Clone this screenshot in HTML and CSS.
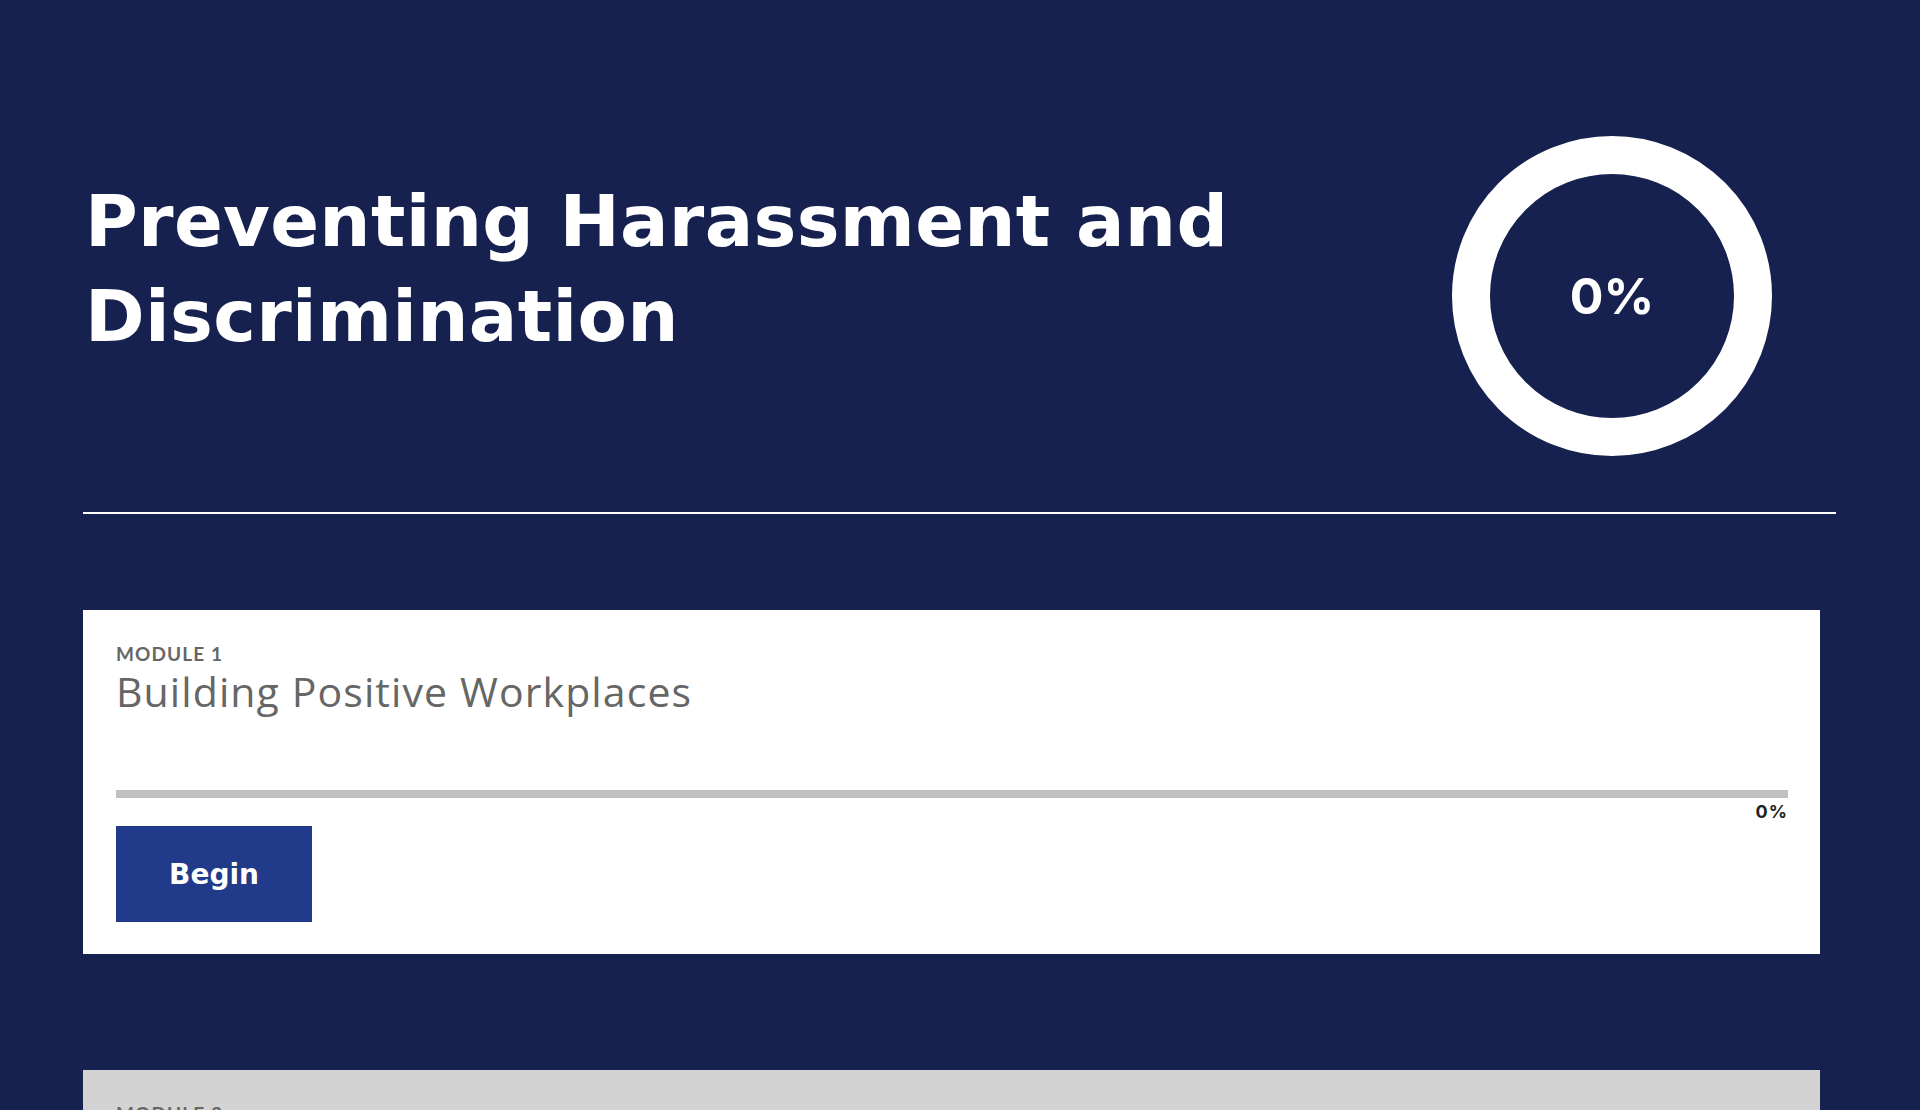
FILE: index.html
```html
<!DOCTYPE html>
<html lang="en">
<head>
<meta charset="utf-8">
<title>Preventing Harassment and Discrimination</title>
<link rel="stylesheet" href="styles.css">
</head>
<body>
<main class="page">
  <header class="course-header">
    <h1 class="course-title">Preventing Harassment and<br>Discrimination</h1>
    <div class="ring">
      <span class="ring-value">0%</span>
    </div>
  </header>
  <hr class="rule">
  <section class="modules">
    <article class="module">
      <div class="module-label">MODULE 1</div>
      <h2 class="module-title">Building Positive Workplaces</h2>
      <div class="progress"><div class="progress-fill" style="width:0%"></div></div>
      <div class="progress-value">0%</div>
      <a class="btn" href="#">Begin</a>
    </article>
    <article class="module locked">
      <div class="module-label">MODULE 2</div>
    </article>
  </section>
</main>
</body>
</html>
```
FILE: styles.css
```css
html, body {
  margin: 0;
  padding: 0;
  background: #16214f;
}
body {
  font-family: Inter, "Liberation Sans", sans-serif;
  overflow: hidden;
}
.page {
  padding: 0 84px 0 83px;
}
.course-header {
  display: flex;
  align-items: flex-start;
  justify-content: space-between;
  padding: 136px 64px 56px 0;
}
.course-title {
  margin: 38px 0 0 2px;
  color: #fff;
  font-family: "DejaVu Sans", sans-serif;
  font-weight: 700;
  font-size: 72px;
  line-height: 95px;
  letter-spacing: 0.3px;
}
.ring {
  width: 320px;
  height: 320px;
  box-sizing: border-box;
  border: 38px solid #fff;
  border-radius: 50%;
  display: flex;
  align-items: center;
  justify-content: center;
  flex: none;
}
.ring-value {
  color: #fff;
  font-family: Inter, sans-serif;
  font-weight: 700;
  font-size: 50px;
  line-height: 1;
}
.rule {
  margin: 0;
  border: 0;
  height: 2px;
  background: #fff;
  width: 1753px;
}
.modules {
  padding-top: 96px;
  display: flex;
  flex-direction: column;
  gap: 116px;
}
.module {
  width: 1737px;
  box-sizing: border-box;
  background: #fff;
  padding: 32px 32px 32px 33px;
}
.module.locked {
  background: #d3d3d3;
  height: 300px;
}
.module-label {
  font-family: Lato, sans-serif;
  font-weight: 700;
  font-size: 19px;
  line-height: 24px;
  letter-spacing: 1.1px;
  color: #666;
}
.module-title {
  margin: 0;
  font-family: "Open Sans", sans-serif;
  font-weight: 500;
  font-size: 41px;
  line-height: 50px;
  letter-spacing: 1.1px;
  color: #666;
  height: 124px;
}
.progress {
  height: 8px;
  background: #c0c0c0;
}
.progress-fill {
  height: 100%;
  background: #223a8a;
}
.progress-value {
  text-align: right;
  font-family: Inter, sans-serif;
  font-weight: 700;
  font-size: 18px;
  line-height: 28px;
  letter-spacing: 1px;
  color: #222;
}
.btn {
  display: inline-flex;
  align-items: center;
  justify-content: center;
  width: 196px;
  height: 96px;
  background: #223a8a;
  color: #fff;
  text-decoration: none;
  font-family: "DejaVu Sans", sans-serif;
  font-weight: 700;
  font-size: 28px;
}
```
